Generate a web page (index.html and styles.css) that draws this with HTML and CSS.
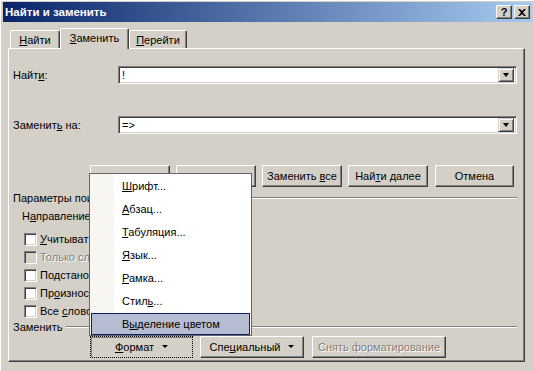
FILE: index.html
```html
<!DOCTYPE html>
<html lang="ru">
<head>
<meta charset="utf-8">
<title>Найти и заменить</title>
<link rel="stylesheet" href="styles.css">
</head>
<body>
<div class="window">
  <div class="titlebar">
    <span class="title">Найти и заменить</span>
    <div class="caption-btns">
      <span class="cbtn">?</span>
      <span class="cbtn cbtn-close">
        <svg width="8" height="7" viewBox="0 0 8 7"><path d="M0 0h2l2 2 2-2h2L5 3.5 8 7H6L4 5 2 7H0l3-3.5z" fill="#000"/></svg>
      </span>
    </div>
  </div>
  <div class="content">
    <div class="tabs">
      <div class="tab t1"><span><u>Н</u>айти</span></div>
      <div class="tab t2 active"><span><u>З</u>аменить</span></div>
      <div class="tab t3"><span><u>П</u>ерейти</span></div>
    </div>
    <div class="panel">
      <div class="field-row row-find">
        <label class="flabel">Найт<u>и</u>:</label>
        <div class="combo"><span class="ctext">!</span><span class="dd"><i class="arr"></i></span></div>
      </div>
      <div class="field-row row-repl">
        <label class="flabel">Заменит<u>ь</u> на:</label>
        <div class="combo"><span class="ctext">=&gt;</span><span class="dd"><i class="arr"></i></span></div>
      </div>
      <div class="btn-row">
        <span class="btn w80"></span>
        <span class="btn w80"></span>
        <span class="btn w80"><span>Заменить <u>в</u>се</span></span>
        <span class="btn w80"><span>Най<u>т</u>и далее</span></span>
        <span class="btn w79"><span>Отмена</span></span>
      </div>
      <div class="group-head gh1"><span>Параметры пои</span><i class="groove"></i></div>
      <div class="dir-row"><span>Н<u>а</u>правление</span></div>
      <div class="checks">
        <div class="chk"><i class="box"></i><span><u>У</u>читыват</span></div>
        <div class="chk disabled"><i class="box"></i><span>Только сл</span></div>
        <div class="chk"><i class="box"></i><span>По<u>д</u>стано</span></div>
        <div class="chk"><i class="box"></i><span>Пр<u>о</u>износ</span></div>
        <div class="chk"><i class="box"></i><span>Все <u>с</u>лово</span></div>
      </div>
      <div class="group-head gh2"><span>Заменить</span><i class="groove"></i></div>
      <div class="bottom-row">
        <span class="btn focus b-format"><span><u>Ф</u>ормат</span><i class="arr"></i></span>
        <span class="btn b-spec"><span>Спе<u>ц</u>иальный</span><i class="arr"></i></span>
        <span class="btn disabled b-clear"><span>Снять форматирование</span></span>
      </div>
    </div>
  </div>
  <div class="menu">
    <div class="mi"><u>Ш</u>рифт...</div>
    <div class="mi"><u>А</u>бзац...</div>
    <div class="mi"><u>Т</u>абуляция...</div>
    <div class="mi"><u>Я</u>зык...</div>
    <div class="mi"><u>Р</u>амка...</div>
    <div class="mi">Стил<u>ь</u>...</div>
    <div class="mi hl">В<u>ы</u>деление цветом</div>
  </div>
</div>
</body>
</html>
```

FILE: styles.css
```css
* { box-sizing: border-box; }
html, body { margin: 0; padding: 0; }
body {
  width: 534px;
  height: 371px;
  overflow: hidden;
  background: #d4d0c8;
  font-family: "Liberation Sans", Arial, sans-serif;
  font-size: 11px;
  color: #000;
}
u { text-decoration: underline; text-underline-offset: 1px; }

.window {
  position: relative;
  width: 534px;
  height: 371px;
  padding: 1px 2px 0 2px;
  background: #d4d0c8;
  border-top: 1px solid #fff;
  border-left: 1px solid #fff;
}

.titlebar {
  height: 20px;
  display: flex;
  align-items: center;
  justify-content: space-between;
  padding: 0 2px 0 2px;
  background: linear-gradient(90deg, #0a246a 0%, #a6caf0 100%);
}
.title {
  color: #fff;
  font-weight: bold;
  font-size: 11.5px;
}
.caption-btns { display: flex; gap: 2px; }
.cbtn {
  width: 16px;
  height: 14px;
  display: flex;
  align-items: center;
  justify-content: center;
  background: #d4d0c8;
  border: 1px solid;
  border-color: #fff #404040 #404040 #fff;
  box-shadow: inset -1px -1px #808080;
  font-weight: bold;
  font-size: 11px;
  line-height: 1;
}

.content { padding: 6px 6px 0 5px; }

.tabs {
  display: flex;
  align-items: flex-end;
  height: 20px;
  padding-left: 2px;
  position: relative;
  z-index: 2;
}
.tab {
  height: 18px;
  display: flex;
  align-items: center;
  justify-content: center;
  background: #d4d0c8;
  border-top: 1px solid #fff;
  border-left: 1px solid #fff;
  border-right: 1px solid #404040;
  box-shadow: inset -1px 0 #808080;
  border-radius: 2px 2px 0 0;
}
.t1 { width: 50px; }
.t2 { width: 69px; }
.t3 { width: 58px; }
.tab.active {
  height: 21px;
  margin-bottom: -1px;
  padding-bottom: 2px;
}

.panel {
  position: relative;
  z-index: 1;
  width: 517px;
  height: 314px;
  border: 1px solid;
  border-color: #fff #404040 #404040 #fff;
  box-shadow: inset -1px -1px #808080;
  padding: 17px 7px 0 4px;
  display: flex;
  flex-direction: column;
}

.field-row {
  display: flex;
  align-items: center;
  height: 18px;
}
.row-repl { margin-top: 32px; }
.flabel { width: 105px; flex: none; }
.combo {
  flex: 1;
  height: 18px;
  background: #fff;
  border: 1px solid;
  border-color: #808080 #fff #fff #808080;
  box-shadow: inset 1px 1px #404040, inset -1px -1px #d4d0c8;
  display: flex;
  align-items: center;
  justify-content: space-between;
  padding: 2px 2px 2px 3px;
}
.ctext { line-height: 12px; }
.dd {
  width: 16px;
  height: 14px;
  background: #d4d0c8;
  border: 1px solid;
  border-color: #d4d0c8 #404040 #404040 #d4d0c8;
  box-shadow: inset 1px 1px #fff, inset -1px -1px #808080;
  display: flex;
  align-items: center;
  justify-content: center;
}
.arr {
  display: inline-block;
  width: 0;
  height: 0;
  border-left: 3.5px solid transparent;
  border-right: 3.5px solid transparent;
  border-top: 4px solid #000;
}

.btn-row {
  display: flex;
  margin-top: 31px;
  padding-left: 77px;
  gap: 6px;
}
.btn {
  height: 22px;
  display: inline-flex;
  align-items: center;
  justify-content: center;
  background: #d4d0c8;
  border: 1px solid;
  border-color: #fff #404040 #404040 #fff;
  box-shadow: inset -1px -1px #808080;
  white-space: nowrap;
}
.w80 { width: 80px; }
.w79 { width: 79px; margin-left: 1px; }

.group-head {
  display: flex;
  align-items: center;
  height: 14px;
  margin-top: 4px;
}
.group-head span { flex: none; padding-right: 4px; white-space: nowrap; }
.groove {
  flex: 1;
  height: 2px;
  border-top: 1px solid #808080;
  border-bottom: 1px solid #fff;
}
.dir-row {
  height: 14px;
  line-height: 14px;
  margin-top: 4px;
  padding-left: 9px;
  white-space: nowrap;
}
.checks { margin-top: 7px; padding-left: 11px; display: flex; flex-direction: column; }
.chk {
  height: 18px;
  display: flex;
  align-items: center;
  gap: 3px;
  white-space: nowrap;
}
.box {
  width: 13px;
  height: 13px;
  flex: none;
  background: #fff;
  border: 1px solid;
  border-color: #808080 #fff #fff #808080;
  box-shadow: inset 1px 1px #404040, inset -1px -1px #d4d0c8;
}
.chk.disabled span { color: #808080; text-shadow: 1px 1px #fff; }
.chk.disabled .box { background: #d4d0c8; }

.gh2 { margin-top: 0; }
.bottom-row {
  display: flex;
  margin-top: 2px;
  padding-left: 77px;
  gap: 7px;
}
.b-format { width: 103px; }
.b-spec { width: 104px; }
.b-clear { width: 134px; margin-left: 1px; }
.btn .arr { margin-left: 8px; border-left-width: 3px; border-right-width: 3px; border-top-width: 3px; position: relative; top: -1px; }
.btn.focus {
  border: 1px dotted #000;
  box-shadow: inset 1px 1px #808080;
}
.btn.disabled { color: #808080; text-shadow: 1px 1px #fff; }

.menu {
  position: absolute;
  left: 88px;
  top: 172px;
  width: 163px;
  height: 163px;
  z-index: 10;
  background: linear-gradient(90deg, #f7f6f3 0, #f7f6f3 24px, #fff 24px);
  border: 1px solid #666;
  padding: 1px 1px;
  display: flex;
  flex-direction: column;
}
.mi {
  height: 23px;
  line-height: 23px;
  padding-left: 31px;
}
.mi.hl {
  background: #b6bdd2;
  border: 1px solid #0a246a;
  line-height: 21px;
  padding-left: 30px;
  height: 22px;
}
```
